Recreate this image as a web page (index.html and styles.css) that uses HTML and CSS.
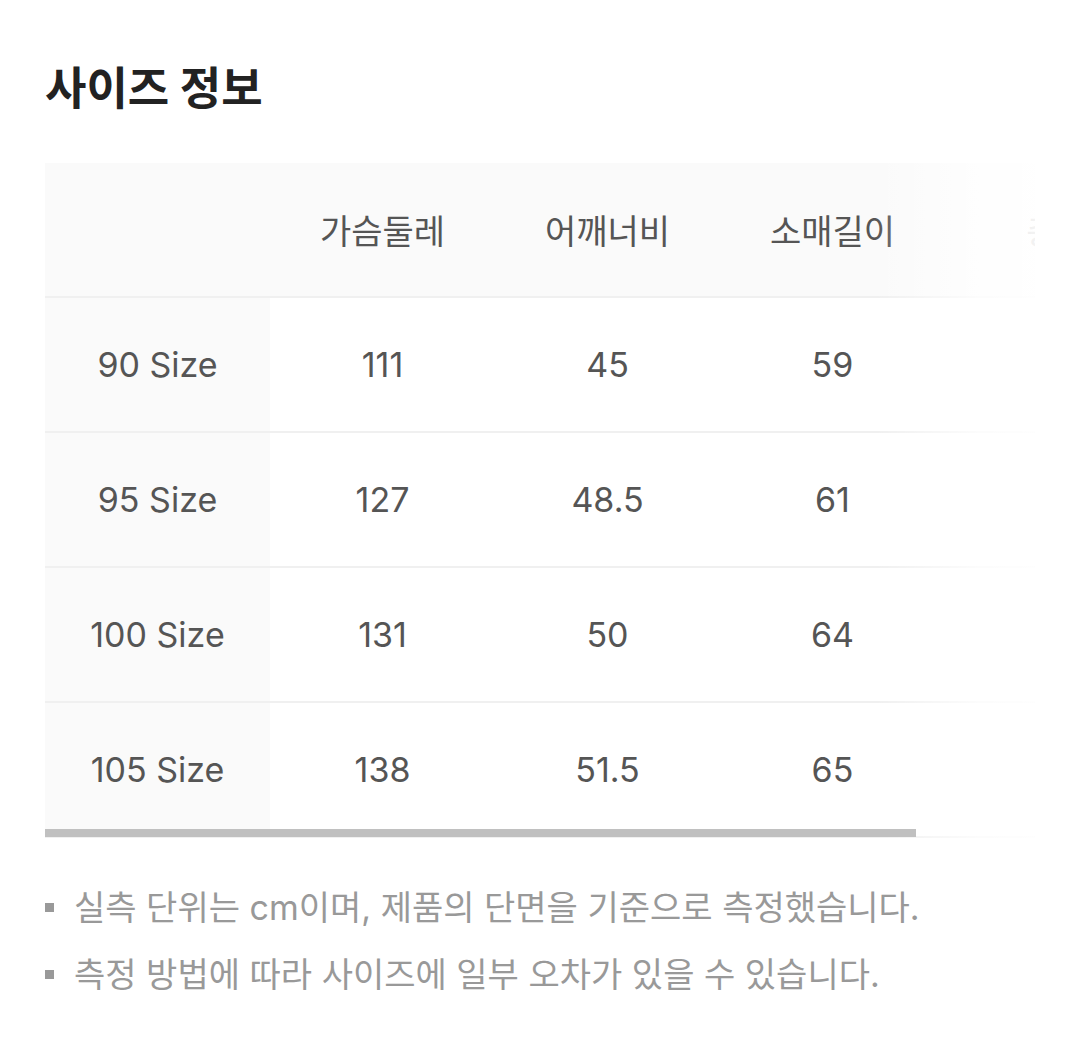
FILE: index.html
```html
<!DOCTYPE html>
<html lang="ko">
<head>
<meta charset="utf-8">
<title>사이즈 정보</title>
<link rel="stylesheet" href="styles.css">
</head>
<body>
<section class="size-info">
  <h2 class="title">사이즈 정보</h2>
  <div class="table-wrap">
    <div class="scroller">
      <table class="size-table">
        <thead>
          <tr>
            <th class="label"></th>
            <th>가슴둘레</th>
            <th>어깨너비</th>
            <th>소매길이</th>
            <th>총장</th>
          </tr>
        </thead>
        <tbody>
          <tr><th class="label">90 Size</th><td>111</td><td>45</td><td>59</td><td>58</td></tr>
          <tr><th class="label">95 Size</th><td>127</td><td>48.5</td><td>61</td><td>60</td></tr>
          <tr><th class="label">100 Size</th><td>131</td><td>50</td><td>64</td><td>62</td></tr>
          <tr><th class="label">105 Size</th><td>138</td><td>51.5</td><td>65</td><td>64</td></tr>
        </tbody>
      </table>
    </div>
    <div class="fade"></div>
    <div class="thumb"></div>
  </div>
  <ul class="notes">
    <li>실측 단위는 cm이며, 제품의 단면을 기준으로 측정했습니다.</li>
    <li>측정 방법에 따라 사이즈에 일부 오차가 있을 수 있습니다.</li>
  </ul>
</section>
</body>
</html>
```
FILE: styles.css
```css
html, body {
  margin: 0;
  padding: 0;
  background: #fff;
}
body {
  font-family: Inter, "Noto Sans CJK KR", sans-serif;
}
.size-info {
  padding: 62px 45px 0 45px;
}
.title {
  margin: 0;
  font-size: 45px;
  line-height: 54px;
  font-weight: 700;
  color: #222;
}
.table-wrap {
  position: relative;
  margin-top: 47px;
  width: 990px;
}
.scroller {
  overflow-x: auto;
  scrollbar-width: none;
}
.scroller::-webkit-scrollbar {
  display: none;
}
.size-table {
  border-collapse: collapse;
  table-layout: fixed;
  width: 1125px;
}
.size-table th,
.size-table td {
  width: 225px;
  height: 133px;
  padding: 0;
  text-align: center;
  vertical-align: middle;
  font-size: 34px;
  font-weight: 400;
  color: #555;
  border-bottom: 2px solid #f0f0f0;
}
.size-table thead th {
  background: #fafafa;
}
.size-table .label {
  background: #fafafa;
}
.fade {
  position: absolute;
  top: 0;
  right: 0;
  bottom: 0;
  width: 160px;
  background: linear-gradient(to right, rgba(255,255,255,0) 0%, rgba(255,255,255,0.8) 65%, rgba(255,255,255,0.93) 100%);
  pointer-events: none;
}
.thumb {
  position: absolute;
  left: 0;
  bottom: 1px;
  width: 871px;
  height: 8px;
  background: #c0c0c0;
}
.notes {
  list-style: none;
  margin: 36px 0 0 0;
  padding: 0;
}
.notes li {
  display: flex;
  align-items: center;
  gap: 20px;
  font-size: 34px;
  line-height: 67px;
  color: #999;
}
.notes li::before {
  content: "";
  flex: none;
  width: 9px;
  height: 9px;
  background: #999;
}
```
